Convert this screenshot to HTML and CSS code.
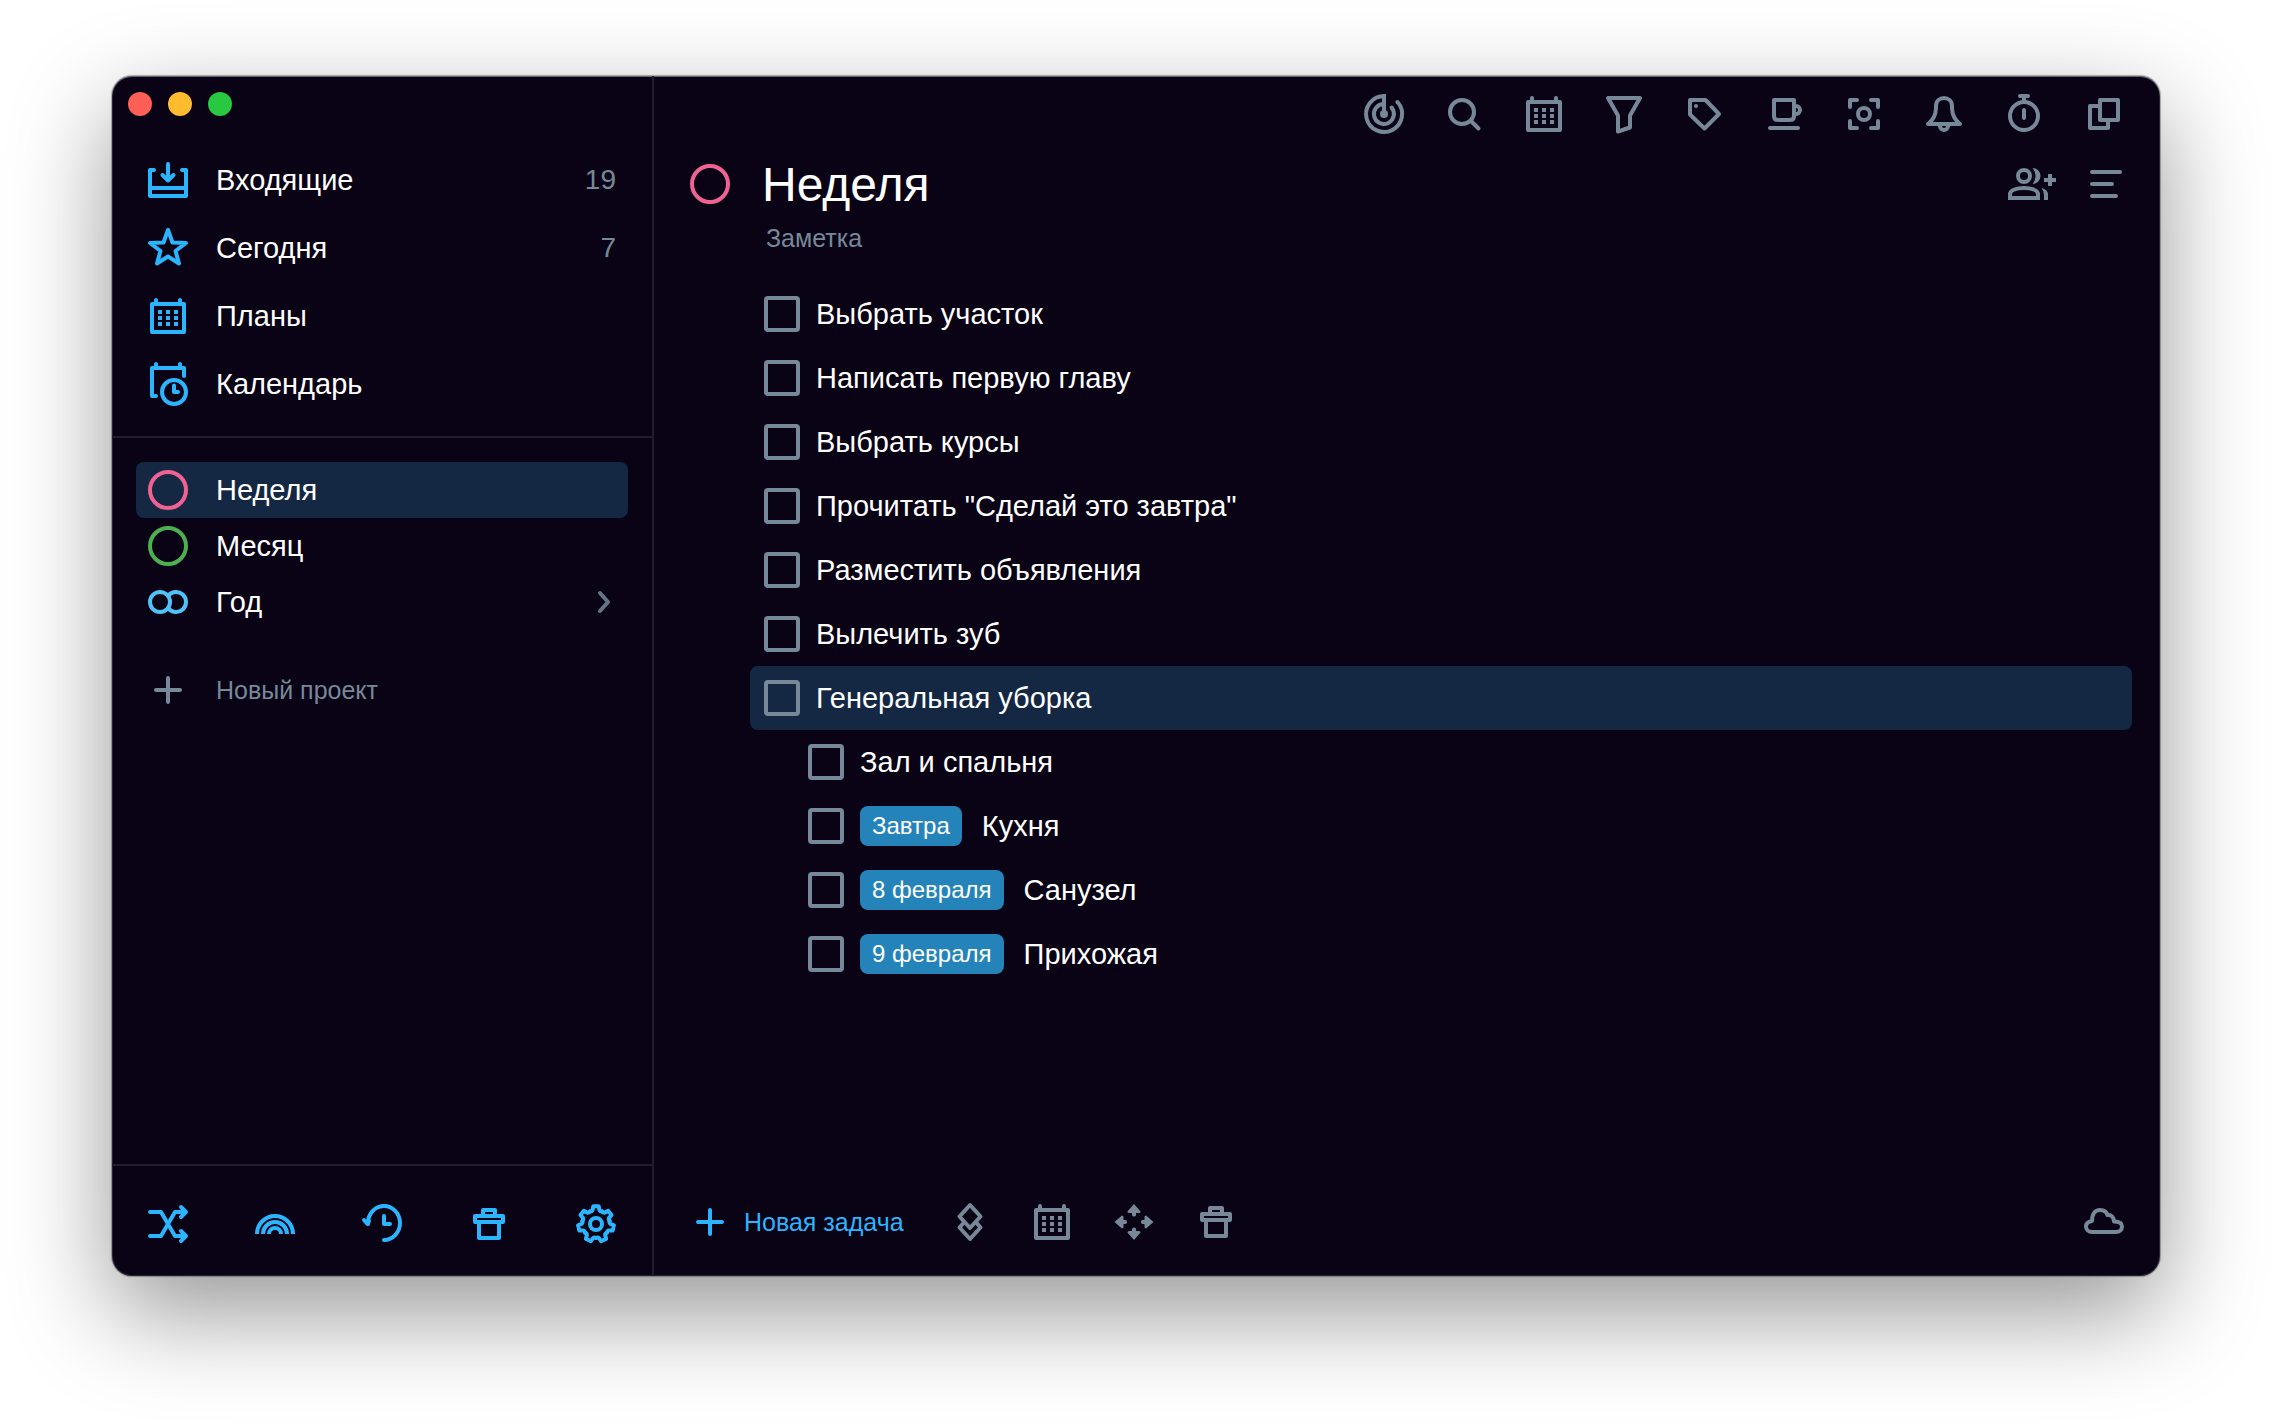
FILE: index.html
```html
<!DOCTYPE html>
<html lang="ru">
<head>
<meta charset="utf-8">
<meta name="viewport" content="width=device-width, initial-scale=1">
<title>Неделя</title>
<link rel="stylesheet" href="styles.css">
</head>
<body>
<svg class="sprite" aria-hidden="true">
  <symbol id="calendar" viewBox="0 0 40 40">
    <path d="M4 8H36V36H4ZM8 4V8M32 4V8"/>
    <path class="solid" d="M10 14h4v4h-4zM18 14h4v4h-4zM26 14h4v4h-4zM10 20h4v4h-4zM18 20h4v4h-4zM26 20h4v4h-4zM10 26h4v4h-4zM18 26h4v4h-4zM26 26h4v4h-4z"/>
  </symbol>
  <symbol id="trash" viewBox="0 0 40 40">
    <path d="M6 12H34V18H6ZM14 12V6H26V12M10 18V34H30V18"/>
  </symbol>
  <symbol id="plus" viewBox="0 0 40 40"><path d="M20 8V32M8 20H32"/></symbol>
  <symbol id="ring" viewBox="0 0 40 40"><circle cx="20" cy="20" r="18"/></symbol>
  <symbol id="gear-tooth" viewBox="0 0 40 40">
    <path d="M13.9 7.4Q15.8 7.6 16.6 6L17.3 2.2H22.7L23.4 6Q24.2 7.6 26.1 7.4"/>
  </symbol>
  <symbol id="arrow" viewBox="0 0 40 40">
    <path class="solid" d="M20 2L26.600 9.400Q26.400 11 25 11H22V13Q22 14.500 20 14.500T18 13V11H15Q13.600 11 13.400 9.400Z"/>
  </symbol>
</svg>

<div class="window">
  <aside class="sidebar">
    <div class="lights">
      <button class="light light-close" aria-label="Закрыть"></button>
      <button class="light light-minimize" aria-label="Свернуть"></button>
      <button class="light light-zoom" aria-label="Развернуть"></button>
    </div>

    <nav class="nav">
      <a class="nav-row" href="#inbox">
        <svg class="icon" viewBox="0 0 40 40"><path d="M6 10H2V36H38V10H34M2 28H38M20 4V20M14.5 15L20 20.5L25.5 15"/></svg>
        <span class="nav-name">Входящие</span><span class="count">19</span>
      </a>
      <a class="nav-row" href="#today">
        <svg class="icon" viewBox="0 0 40 40"><path d="M20 2L24.5 14.5L38 15L27.5 23L31 35.500L20 28.500L9 35.500L12.500 23L2 15L15.500 14.500Z"/></svg>
        <span class="nav-name">Сегодня</span><span class="count">7</span>
      </a>
      <a class="nav-row" href="#plans">
        <svg class="icon"><use href="#calendar"/></svg>
        <span class="nav-name">Планы</span>
      </a>
      <a class="nav-row" href="#calendar-view">
        <svg class="icon" viewBox="0 0 40 40"><path d="M36 12V4H4V32H8M8 0V4M32 0V4M26 21.500V28H30"/><circle cx="26" cy="28" r="12"/></svg>
        <span class="nav-name">Календарь</span>
      </a>
    </nav>

    <div class="projects">
      <a class="project is-selected" href="#week" aria-current="page">
        <svg class="icon pink"><use href="#ring"/></svg><span class="nav-name">Неделя</span>
      </a>
      <a class="project" href="#month">
        <svg class="icon green"><use href="#ring"/></svg><span class="nav-name">Месяц</span>
      </a>
      <a class="project" href="#year">
        <svg class="icon sky" viewBox="0 0 40 40"><circle cx="12" cy="20" r="10"/><path class="butt" d="M20 14A10 10 0 1 1 20 26"/></svg>
        <span class="nav-name">Год</span>
        <svg class="chevron" viewBox="0 0 16 24"><path d="M4 3L12 12L4 21"/></svg>
      </a>
      <button class="project new-project">
        <svg class="icon"><use href="#plus"/></svg><span class="nav-name">Новый проект</span>
      </button>
    </div>

    <div class="sidebar-tools">
      <button class="tool" aria-label="Перемешать"><svg class="icon" viewBox="0 0 40 40"><path d="M2 8H13L27 32H38M2 32H13L27 8H38M33 3L38 8L33 13M33 27L38 32L33 37"/></svg></button>
      <button class="tool" aria-label="Сферы"><svg class="icon" viewBox="0 0 40 40"><path class="butt" d="M2 30A18 18 0 0 1 38 30M8 30A12 12 0 0 1 32 30M14 30A6 6 0 0 1 26 30"/></svg></button>
      <button class="tool" aria-label="История"><svg class="icon" viewBox="0 0 40 40"><path d="M6 20A16 17 0 1 1 22 36M2 16L5.500 20L7 17M22 12V20H28"/></svg></button>
      <button class="tool" aria-label="Корзина"><svg class="icon"><use href="#trash"/></svg></button>
      <button class="tool" aria-label="Настройки">
        <svg class="icon" viewBox="0 0 40 40">
          <use href="#gear-tooth"/>
          <use href="#gear-tooth" transform="rotate(51.430 20 20)"/>
          <use href="#gear-tooth" transform="rotate(102.860 20 20)"/>
          <use href="#gear-tooth" transform="rotate(154.290 20 20)"/>
          <use href="#gear-tooth" transform="rotate(205.710 20 20)"/>
          <use href="#gear-tooth" transform="rotate(257.140 20 20)"/>
          <use href="#gear-tooth" transform="rotate(308.570 20 20)"/>
          <circle cx="20" cy="20" r="6"/>
        </svg>
      </button>
    </div>
  </aside>

  <main class="main">
    <div class="toolbar">
      <button class="tool" aria-label="Цели"><svg class="icon" viewBox="0 0 40 40"><path class="butt" d="M20 0V20M20 2A18 18 0 1 0 33.500 8M20 10A10 10 0 1 0 27.500 13.500"/><circle class="solid" cx="20" cy="20" r="4"/><circle class="solid" cx="33.300" cy="8" r="2"/><circle class="solid" cx="27.600" cy="13.600" r="2"/></svg></button>
      <button class="tool" aria-label="Поиск"><svg class="icon" viewBox="0 0 40 40"><circle cx="18" cy="18" r="12"/><path d="M27 27L34.500 34.500"/></svg></button>
      <button class="tool" aria-label="Дата"><svg class="icon"><use href="#calendar"/></svg></button>
      <button class="tool" aria-label="Фильтр"><svg class="icon" viewBox="0 0 40 40"><path d="M4 4H36L26 21.500V33.500L14 37.500V21.500Z"/></svg></button>
      <button class="tool" aria-label="Метки"><svg class="icon" viewBox="0 0 40 40"><path d="M6 6H21.500L35 20L20.500 34.500L6 20.500Z"/><circle class="solid" cx="12" cy="12" r="2"/></svg></button>
      <button class="tool" aria-label="Перерыв"><svg class="icon" viewBox="0 0 40 40"><path d="M10 6H30V22Q30 26 26 26H14Q10 26 10 22ZM31 12H32A4 4 0 0 1 32 20H31M6 34H34"/></svg></button>
      <button class="tool" aria-label="Фокус"><svg class="icon" viewBox="0 0 40 40"><path d="M6 13V6H13M27 6H34V13M34 27V34H27M13 34H6V27"/><circle cx="20" cy="20" r="6"/></svg></button>
      <button class="tool" aria-label="Напоминания"><svg class="icon" viewBox="0 0 40 40"><path d="M4 30C9 26 12 21 12 14V12C12 7 15.500 4 20 4S28 7 28 12V14C28 21 31 26 36 30ZM16 32A4 4 0 0 0 24 32"/></svg></button>
      <button class="tool" aria-label="Таймер"><svg class="icon" viewBox="0 0 40 40"><circle cx="20" cy="22" r="14"/><path d="M16 2H24M20 2V8M20 16V24"/></svg></button>
      <button class="tool" aria-label="Окна"><svg class="icon" viewBox="0 0 40 40"><path d="M16 6H34V26H16ZM16 12H6V34H24V26"/></svg></button>
    </div>

    <header class="header">
      <svg class="icon pink"><use href="#ring"/></svg>
      <h1 class="title">Неделя</h1>
      <button class="tool" aria-label="Добавить участника">
        <svg class="icon icon-wide" viewBox="0 0 48 40">
          <circle cx="16" cy="12" r="6"/>
          <path class="sharp" d="M2 34V30C2 26 9 24 16 24S30 26 30 30V34ZM42 10V22M36 16H48"/>
          <path class="solid" d="M24.500 4A8 8 0 0 1 24.500 20C28.500 15 28.500 9 24.500 4ZM33.500 24Q40 25.500 40 31V36H36V31Q36 27 33.500 24Z"/>
        </svg>
      </button>
      <button class="tool" aria-label="Меню"><svg class="icon" viewBox="0 0 40 40"><path d="M8 8H36M8 20H28M8 32H32"/></svg></button>
    </header>
    <input class="note" type="text" placeholder="Заметка" aria-label="Заметка">

    <ul class="tasks">
      <li class="task"><input class="check" type="checkbox" id="t1"><label for="t1">Выбрать участок</label></li>
      <li class="task"><input class="check" type="checkbox" id="t2"><label for="t2">Написать первую главу</label></li>
      <li class="task"><input class="check" type="checkbox" id="t3"><label for="t3">Выбрать курсы</label></li>
      <li class="task"><input class="check" type="checkbox" id="t4"><label for="t4">Прочитать "Сделай это завтра"</label></li>
      <li class="task"><input class="check" type="checkbox" id="t5"><label for="t5">Разместить объявления</label></li>
      <li class="task"><input class="check" type="checkbox" id="t6"><label for="t6">Вылечить зуб</label></li>
      <li class="task is-selected"><input class="check" type="checkbox" id="t7"><label for="t7">Генеральная уборка</label></li>
      <li class="task subtask"><input class="check" type="checkbox" id="t8"><label for="t8">Зал и спальня</label></li>
      <li class="task subtask"><input class="check" type="checkbox" id="t9"><label for="t9"><span class="date">Завтра</span>Кухня</label></li>
      <li class="task subtask"><input class="check" type="checkbox" id="t10"><label for="t10"><span class="date">8 февраля</span>Санузел</label></li>
      <li class="task subtask"><input class="check" type="checkbox" id="t11"><label for="t11"><span class="date">9 февраля</span>Прихожая</label></li>
    </ul>

    <footer class="actions">
      <button class="new-task"><svg class="icon"><use href="#plus"/></svg>Новая задача</button>
      <button class="tool" aria-label="Слои"><svg class="icon" viewBox="0 0 40 40"><path d="M20 3L30.500 14.500L20 26L9.500 14.500ZM13 21.500L9.500 25.500L20 37L30.500 25.500L27 21.500"/></svg></button>
      <button class="tool" aria-label="Запланировать"><svg class="icon"><use href="#calendar"/></svg></button>
      <button class="tool" aria-label="Переместить">
        <svg class="icon" viewBox="0 0 40 40">
          <use href="#arrow"/>
          <use href="#arrow" transform="rotate(90 20 20) translate(0 -1.500)"/>
          <use href="#arrow" transform="rotate(180 20 20)"/>
          <use href="#arrow" transform="rotate(270 20 20) translate(0 -1.500)"/>
        </svg>
      </button>
      <button class="tool" aria-label="Удалить"><svg class="icon"><use href="#trash"/></svg></button>
      <button class="tool sync" aria-label="Синхронизация"><svg class="icon" viewBox="0 0 40 40"><path d="M8 30C4.500 30 2 27.500 2 24.500C2 21.500 4.500 19.500 8 19C8 12 11 8 16 8C20 8 22.500 10 23.500 13C27.500 12.500 30 15.500 30 19.500C35 19.500 38 21 38 24.500C38 28 35.500 30 32 30Z"/></svg></button>
    </footer>
  </main>
</div>
</body>
</html>
```
FILE: styles.css
```css
:root {
  --bg: #0a0315;
  --line: #201d2e;
  --selected: #142844;
  --accent: #2bb5ff;
  --muted: #778899;
}

* {
  box-sizing: border-box;
}

body {
  margin: 0;
  padding: 76px 112px 148px;
  background: #fff;
  color: #fff;
  font: 29px/40px "Liberation Sans", Arial, sans-serif;
}

button,
input {
  margin: 0;
  padding: 0;
  border: 0;
  background: none;
  color: inherit;
  font: inherit;
}

a {
  color: inherit;
  text-decoration: none;
}

.sprite {
  position: absolute;
  width: 0;
  height: 0;
}

.window {
  display: flex;
  min-height: calc(100vh - 224px);
  border-radius: 20px;
  background: var(--bg);
  box-shadow:
    inset 0 1px rgba(255, 255, 255, 0.3),
    inset 0 0 0 1px rgba(255, 255, 255, 0.12),
    0 0 1px 1px rgba(0, 0, 0, 0.3),
    0 36px 100px rgba(0, 0, 0, 0.42);
}

/* Icons */

.icon,
.chevron {
  display: block;
  flex: none;
  width: 40px;
  height: 40px;
  overflow: visible;
  fill: none;
  stroke: currentColor;
  stroke-width: 4;
  stroke-linecap: round;
  stroke-linejoin: round;
}

.icon-wide {
  width: 48px;
}

.chevron {
  width: 16px;
  height: 24px;
  color: #667585;
}

.solid {
  fill: currentColor;
  stroke: none;
}

.butt {
  stroke-linecap: butt;
}

.sharp {
  stroke-linecap: butt;
  stroke-linejoin: miter;
}

.pink {
  color: #f06292;
}

.green {
  color: #4caf50;
}

.sky {
  color: #4fc3f7;
}

/* Sidebar */

.sidebar {
  display: flex;
  flex: none;
  flex-direction: column;
  width: 542px;
  border-right: 2px solid var(--line);
}

.lights {
  display: flex;
  gap: 16px;
  padding: 16px 16px 30px;
}

.light {
  width: 24px;
  height: 24px;
  border-radius: 50%;
}

.light-close {
  background: #ff5f57;
}

.light-minimize {
  background: #febc2e;
}

.light-zoom {
  background: #28c840;
}

.nav {
  padding: 0 36px 18px;
  border-bottom: 2px solid var(--line);
}

.nav-row,
.project {
  display: flex;
  align-items: center;
  gap: 28px;
  height: 68px;
}

.nav-row .icon {
  color: var(--accent);
}

.nav-name {
  flex: 1;
}

.count {
  color: var(--muted);
  font-size: 28px;
}

.projects {
  display: flex;
  flex: 1;
  flex-direction: column;
  padding: 24px;
}

.project {
  height: 56px;
  padding: 0 16px 0 12px;
  border-radius: 8px;
}

.is-selected {
  background: var(--selected);
}

.new-project {
  margin-top: 32px;
  color: var(--muted);
  font-size: 25px;
  text-align: left;
}

.sidebar-tools {
  display: flex;
  justify-content: space-between;
  padding: 38px 36px 32px;
  border-top: 2px solid var(--line);
  color: var(--accent);
}

/* Main pane */

.main {
  display: flex;
  flex: 1;
  flex-direction: column;
  min-width: 0;
}

.toolbar {
  display: flex;
  justify-content: flex-end;
  gap: 40px;
  padding: 18px 36px 22px;
  color: var(--muted);
}

.header {
  display: flex;
  align-items: center;
  gap: 28px;
  padding: 0 36px;
  color: var(--muted);
}

.title {
  flex: 1;
  margin: 0 0 0 4px;
  padding-top: 2px;
  color: #fff;
  font-size: 48px;
  font-weight: 400;
  line-height: 54px;
}

.note {
  height: 32px;
  margin: 10px 36px 28px 112px;
  color: var(--muted);
  font-size: 25px;
}

.note::placeholder {
  color: var(--muted);
  opacity: 1;
}

.tasks {
  flex: 1;
  margin: 0 28px 0 96px;
  padding: 0;
  list-style: none;
}

.task {
  display: flex;
  align-items: center;
  gap: 16px;
  height: 64px;
  padding-left: 14px;
  border-radius: 8px;
}

.subtask {
  padding-left: 58px;
}

.task label {
  display: flex;
  align-items: center;
  gap: 20px;
}

.check {
  flex: none;
  width: 36px;
  height: 36px;
  border: 4px solid var(--muted);
  border-radius: 4px;
  appearance: none;
}

.check:checked {
  background: var(--muted);
}

.date {
  padding: 0 12px;
  border-radius: 8px;
  background: #2484ba;
  font-size: 24px;
}

.actions {
  display: flex;
  align-items: center;
  gap: 42px;
  padding: 0 36px 34px;
  color: var(--muted);
}

.new-task {
  display: flex;
  align-items: center;
  gap: 14px;
  margin-right: 4px;
  color: var(--accent);
  font-size: 25px;
}

.sync {
  margin-left: auto;
}
```
